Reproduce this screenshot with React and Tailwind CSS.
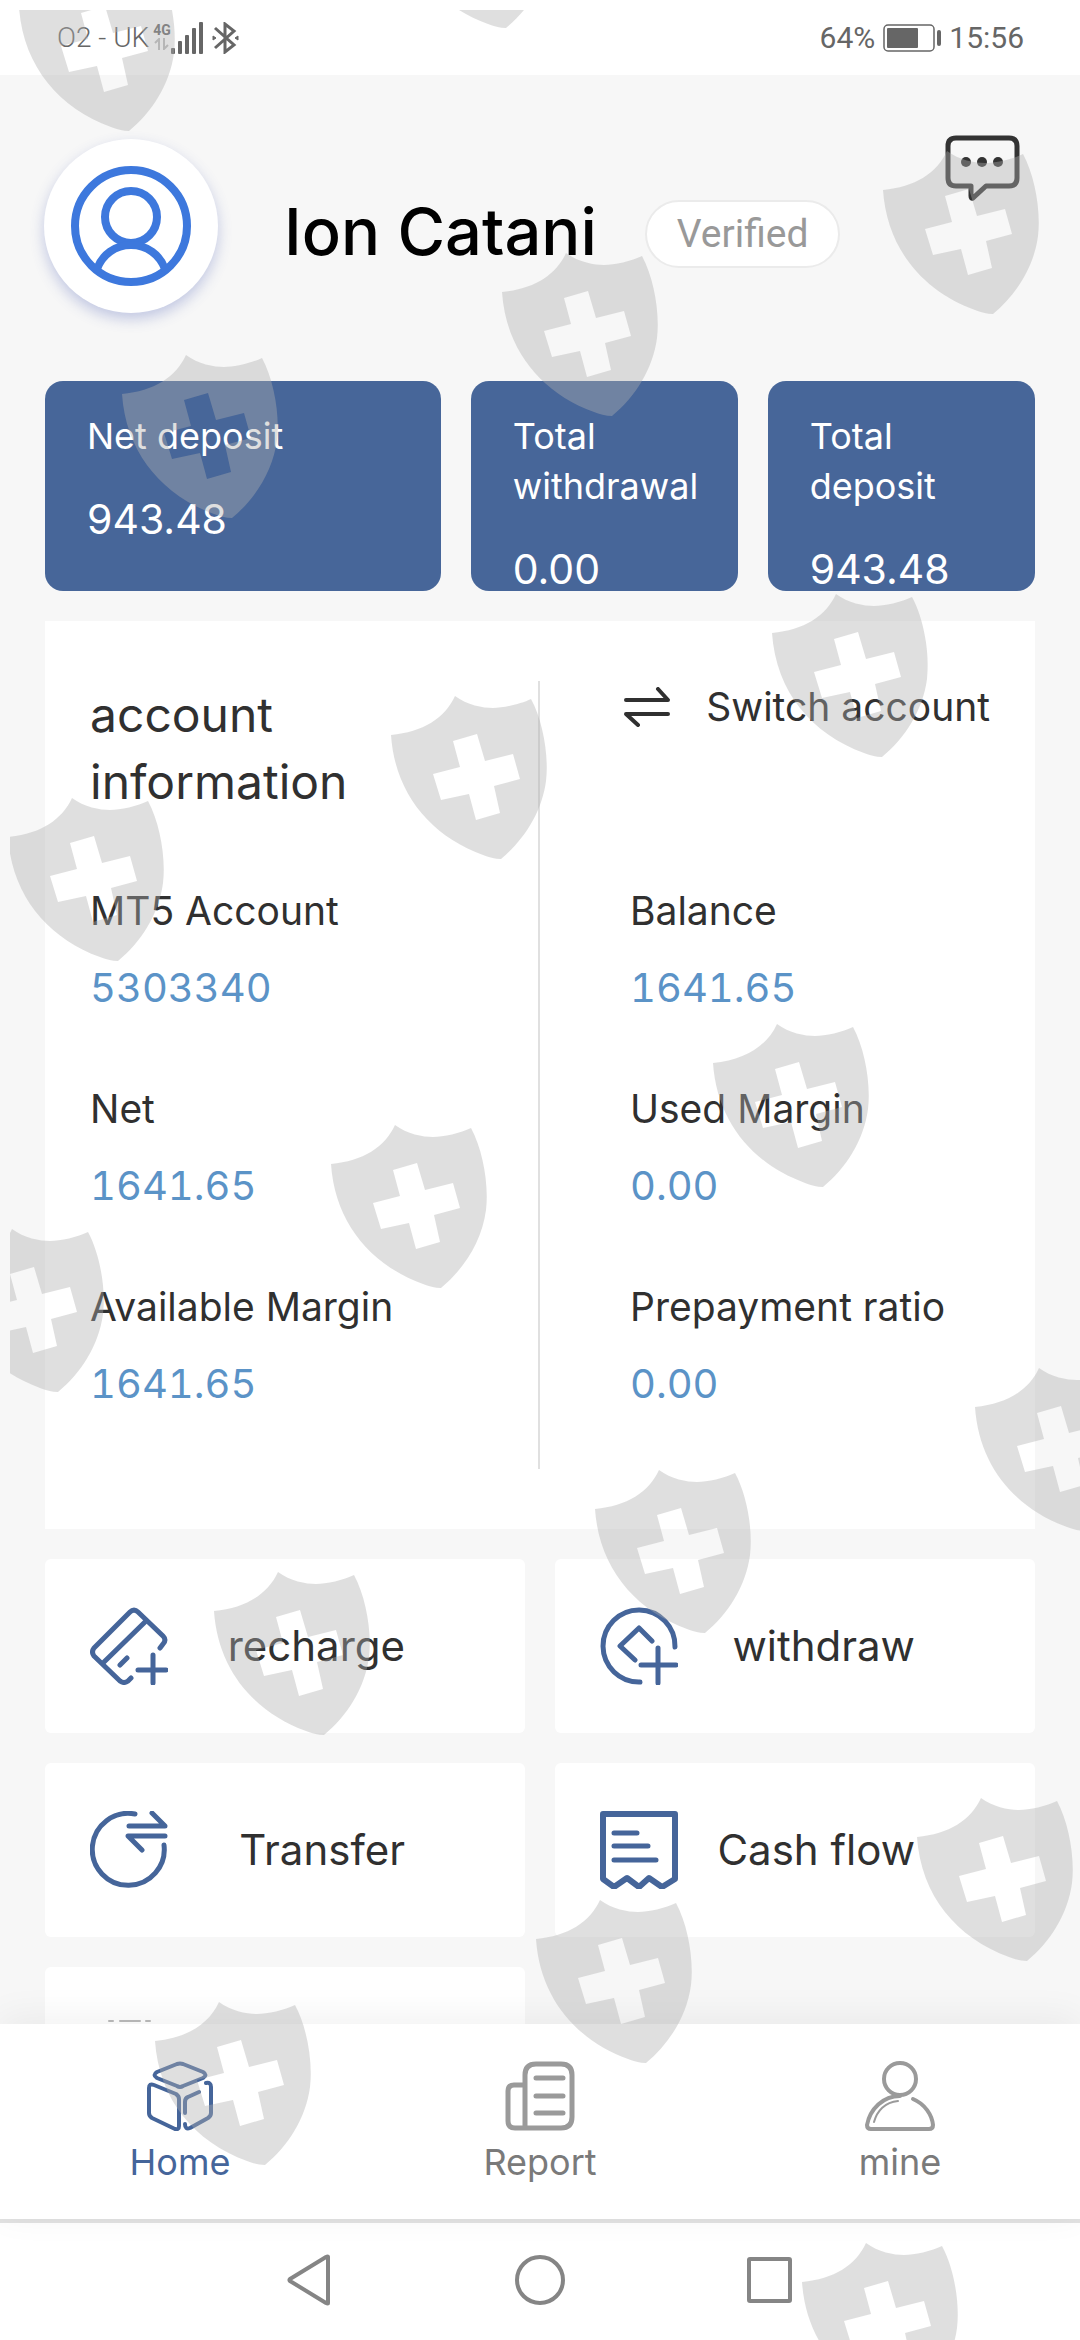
import React from 'react';

const stats = [
  { label: 'Net deposit', value: '943.48', width: 'w-[40%]' },
  { label: 'Total withdrawal', value: '0.00', width: 'w-[27%]' },
  { label: 'Total deposit', value: '943.48', width: 'w-[27%]' },
];

const leftInfo = [
  { label: 'MT5 Account', value: '5303340' },
  { label: 'Net', value: '1641.65' },
  { label: 'Available Margin', value: '1641.65' },
];

const rightInfo = [
  { label: 'Balance', value: '1641.65' },
  { label: 'Used Margin', value: '0.00' },
  { label: 'Prepayment ratio', value: '0.00' },
];

// Top left corner of every shield stamp
const shields = [
  [19, -32], [396, -135], [883, 151], [502, 253], [122, 355], [772, 594],
  [391, 696], [8, 798], [713, 1024], [331, 1125], [-52, 1229], [975, 1368],
  [595, 1470], [214, 1572], [917, 1798], [536, 1900], [155, 2002], [802, 2243],
];

const Icon = ({ children, box = '0 0 78 78', className = 'w-[78px] h-[78px]', stroke = 5 }) => (
  <svg
    className={className}
    viewBox={box}
    fill="none"
    stroke="currentColor"
    strokeWidth={stroke}
    strokeLinecap="round"
    strokeLinejoin="round"
    aria-hidden="true"
  >
    {children}
  </svg>
);

const RechargeIcon = () => (
  <Icon>
    <path d="M70 41l3-4q4-4 0-8L48 5q-4-4-8 0L4 41q-3 4 0 8l26 25q4 3 8 0l3-3" />
    <path d="M56 14L14 55M37 51l-7 7M48 63h28M63 48v28" />
  </Icon>
);

const WithdrawIcon = () => (
  <Icon>
    <path d="M75 40A36 36 0 1 0 40 75" />
    <path d="M52 34L39 21 20 39l15 14M41 58h35M58 41v35" />
  </Icon>
);

const TransferIcon = () => (
  <Icon>
    <path d="M45 3A36 36 0 1 0 74 34" />
    <path d="M39 15h36L62 2M75 25H38l14 14" />
  </Icon>
);

const CashFlowIcon = () => (
  <Icon>
    <path strokeWidth="6" d="M3 3h72v65l-13 8-13-9-10 9-12-9-13 9-11-8z" />
    <path d="M14 22h23M14 35h34M14 49h42" />
  </Icon>
);

const RecordIcon = () => (
  <span className="text-[#bbb]">
    <Icon stroke={2}>
      <path d="M19 6h4M30 6h20M56 6h4M12 14v50h54V14" />
    </Icon>
  </span>
);

const actions = [
  { label: 'recharge', icon: RechargeIcon },
  { label: 'withdraw', icon: WithdrawIcon },
  { label: 'Transfer', icon: TransferIcon },
  { label: 'Cash flow', icon: CashFlowIcon },
  { label: '', icon: RecordIcon },
];

const StatusBar = () => (
  <div className="flex h-[75px] shrink-0 items-center justify-between bg-white pr-14 pl-[57px] font-[Roboto,sans-serif] text-[#666]">
    <div className="flex items-center">
      <span className="text-[28px] font-light">O2 - UK</span>
      <div className="ml-1 flex h-8 flex-col items-center">
        <span className="text-[14px] leading-[16px] font-bold">4G</span>
        <svg className="h-3 w-4" viewBox="0 0 16 12" fill="none" stroke="#bbb" strokeWidth="2">
          <path d="M1 5l4-4v11M10 0v11l4-4" />
        </svg>
      </div>
      <svg className="h-8 w-8" viewBox="0 0 32 32" fill="#666">
        <rect x="0" y="26" width="4" height="6" rx="1" />
        <rect x="7" y="19" width="4" height="13" rx="1" />
        <rect x="14" y="13" width="4" height="19" rx="1" />
        <rect x="21" y="6" width="4" height="26" rx="1" />
        <rect x="28" y="0" width="4" height="32" rx="1" />
      </svg>
      <svg className="ml-2 h-8 w-7" viewBox="0 0 28 32" fill="none" stroke="#666" strokeWidth="3">
        <path d="M4 6l19 17-9 7V2l9 7L4 26" />
        <path d="M2 14l3 2-3 2zM24 16l3-2v4z" fill="#666" strokeWidth="1" />
      </svg>
    </div>
    <div className="flex items-center text-[30px]">
      <span>64%</span>
      <svg className="ml-2 h-7 w-[58px]" viewBox="0 0 58 28" fill="none" stroke="#666" strokeWidth="1.5">
        <rect x="1" y="1" width="50" height="26" rx="4" />
        <rect x="4" y="4" width="31" height="20" rx="1" fill="#666" stroke="none" />
        <rect x="54" y="6" width="4" height="16" rx="2" fill="#666" stroke="none" />
      </svg>
      <span className="ml-2">15:56</span>
    </div>
  </div>
);

const Header = () => (
  <header className="flex items-start pt-[60px] pr-[60px] pl-11">
    <div className="mt-1 flex size-[174px] items-center justify-center rounded-full bg-white text-[#3d78dd] shadow-[0_6px_14px_rgba(70,90,180,0.3)]">
      <Icon box="0 0 120 120" className="size-[120px]" stroke={8}>
        <circle cx="60" cy="60" r="56" />
        <circle cx="60" cy="51" r="26" />
        <path d="M26 103c5-14 18-24 34-24s29 10 34 24" />
      </Icon>
    </div>
    <div className="mt-[59px] ml-[66px] flex items-center">
      <h1 className="text-[65px] leading-[76px] font-medium text-black">Ion Catani</h1>
      <span className="mt-1 ml-12 rounded-full border-2 border-[#ebebeb] bg-white px-[30px] py-2 font-[Roboto,sans-serif] text-[39px] leading-[48px] text-[#999]">
        Verified
      </span>
    </div>
    <button className="ml-auto text-[#333]" aria-label="Messages">
      <Icon box="0 0 75 66" className="h-[66px] w-[75px]" stroke={5}>
        <path d="M26 51H11q-8 0-8-8V11q0-8 8-8h53q8 0 8 8v32q0 8-8 8H41L28 63q-2 1-2-2z" />
        <g fill="currentColor" stroke="none">
          <circle cx="21" cy="27" r="5" />
          <circle cx="37" cy="27" r="5" />
          <circle cx="53" cy="27" r="5" />
        </g>
      </Icon>
    </button>
  </header>
);

const InfoList = ({ items }) => (
  <dl className="flex flex-col gap-[61px]">
    {items.map((item) => (
      <div key={item.label}>
        <dt className="text-[39px] leading-[58px]">{item.label}</dt>
        <dd className="mt-[17px] text-[40px] leading-[62px] text-[#5b93c7] tabular-nums">
          {item.value}
        </dd>
      </div>
    ))}
  </dl>
);

const AccountCard = () => (
  <section className="mt-[30px] flex bg-white py-[60px] text-[#303030]">
    <div className="w-1/2 border-r-2 border-[#e0e0e0] pr-20 pb-[54px] pl-[45px]">
      <h2 className="mb-[67px] w-[300px] text-[48px] leading-[67px]">account information</h2>
      <InfoList items={leftInfo} />
    </div>
    <div className="w-1/2 pl-[90px]">
      <div className="mb-[67px] flex h-[134px] items-start justify-end pr-[45px]">
        <button className="flex items-center gap-9 text-[39px] leading-[52px] whitespace-nowrap">
          <Icon box="0 0 46 40" className="h-10 w-[46px]" stroke={4}>
            <path d="M2 13h42L34 2M44 27H2l12 11" />
          </Icon>
          Switch account
        </button>
      </div>
      <InfoList items={rightInfo} />
    </div>
  </section>
);

const TabBar = () => (
  <nav className="relative flex h-[195px] shrink-0 bg-white text-[36px] leading-[48px] text-[#7a7a7a] shadow-[0_-6px_36px_rgba(0,0,0,0.06)]">
    <a href="#home" className="flex flex-1 flex-col items-center gap-[7px] pt-[37px] text-[#45659a]">
      <Icon box="0 0 66 70" className="h-[70px] w-[66px]" stroke={4}>
        <path d="M30 3q3-1 6 0l20 8q5 3 0 6l-20 8q-3 2-6 0l-20-8q-5-3 0-6z" />
        <path d="M2 27q0-5 5-3l22 9q3 2 3 5v27q0 4-4 3L5 57q-3-2-3-5z" />
        <path d="M59 22q5-1 5 4v26q0 3-3 5L43 67q-5 2-5-4M38 52V41q0-4 3-5l11-5" />
      </Icon>
      <span>Home</span>
    </a>
    <a href="#report" className="flex flex-1 flex-col items-center gap-[7px] pt-[37px]">
      <span className="text-[#9a9a9a]">
        <Icon box="0 0 70 70" className="size-[70px]">
          <path d="M20 24H9q-6 0-6 6v30q0 7 7 7h46q11 0 11-11V14q0-11-11-11H31q-11 0-11 11v53" />
          <path d="M31 17h27M31 35h27M31 52h27" />
        </Icon>
      </span>
      <span>Report</span>
    </a>
    <a href="#mine" className="flex flex-1 flex-col items-center gap-[7px] pt-[37px]">
      <span className="text-[#9a9a9a]">
        <Icon box="0 0 70 70" className="size-[70px]" stroke={4}>
          <circle cx="35" cy="18" r="16" />
          <path d="M35 35C18 35 5 48 2 64q0 4 4 4h58q4 0 4-4C67 54 60 43 48 38" />
          <path strokeWidth="2" d="M9 61c3-11 11-20 24-21" />
        </Icon>
      </span>
      <span>mine</span>
    </a>
  </nav>
);

const SystemNav = () => (
  <div className="flex h-[121px] shrink-0 items-center justify-center gap-[180px] border-t-4 border-[#e2e2e2] bg-white pb-1 text-[#858585]">
    <button aria-label="Back">
      <Icon box="0 0 50 52" className="h-[52px] w-[50px]" stroke={4}>
        <path d="M43 3v46q0 1-2 0L5 27q-1-1 0-2L41 3q2-1 2 0z" />
      </Icon>
    </button>
    <button aria-label="Home screen">
      <Icon box="0 0 50 52" className="h-[52px] w-[50px]" stroke={4}>
        <circle cx="25" cy="26" r="23" />
      </Icon>
    </button>
    <button aria-label="Recent apps">
      <Icon box="0 0 50 52" className="h-[52px] w-[50px]" stroke={4}>
        <rect x="4" y="5" width="41" height="42" rx="1" />
      </Icon>
    </button>
  </div>
);

const Shields = () => (
  <div className="pointer-events-none absolute top-[10px] right-0 bottom-0 left-[10px] overflow-hidden">
    <svg className="h-full w-full" fill="#afafaf" fillOpacity="0.4" fillRule="evenodd" aria-hidden="true">
      {shields.map(([x, y]) => (
        <path
          key={`${x},${y}`}
          transform={`translate(${x - 10} ${y - 10})`}
          d="M64 0C76 9 92 12 102 12S130 8 140 3C152 25 158 60 155 85C151 116 133 144 110 163C104 163 97 161 92 159C40 140 4 98 0 39C32 36 54 22 64 0ZM62 45L69 71 42 78 50 104 78 98 85 124 109 117 103 90 129 83 122 58 94 65 86 38Z"
        />
      ))}
    </svg>
  </div>
);

const App = () => {
  return (
    <div className="relative flex h-screen flex-col overflow-hidden bg-[#f7f7f7] font-[Inter,sans-serif]">
      <StatusBar />
      <main className="min-h-0 flex-1 overflow-hidden">
        <Header />
        <div className="px-[45px] pt-[68px]">
          <section className="flex justify-between">
            {stats.map((stat) => (
              <div
                key={stat.label}
                className={`${stat.width} min-h-[210px] rounded-[18px] bg-[#476699] pt-[30px] pl-[42px] text-white`}
              >
                <p className="pr-8 text-[36px] leading-[50px]">{stat.label}</p>
                <p className="mt-9 text-[41px] leading-[44px]">{stat.value}</p>
              </div>
            ))}
          </section>
          <AccountCard />
          <section className="mt-[30px] grid grid-cols-2 gap-[30px]">
            {actions.map(({ label, icon: ActionIcon }) => (
              <button
                key={label}
                aria-label={label || 'More'}
                className="flex h-[174px] items-center justify-between rounded-md bg-white pr-[120px] pl-[45px] text-[42px] leading-[60px] text-[#45659a]"
              >
                <ActionIcon />
                <span className="text-[#303030]">{label}</span>
              </button>
            ))}
          </section>
        </div>
      </main>
      <TabBar />
      <SystemNav />
      <Shields />
    </div>
  );
};

export default App;
